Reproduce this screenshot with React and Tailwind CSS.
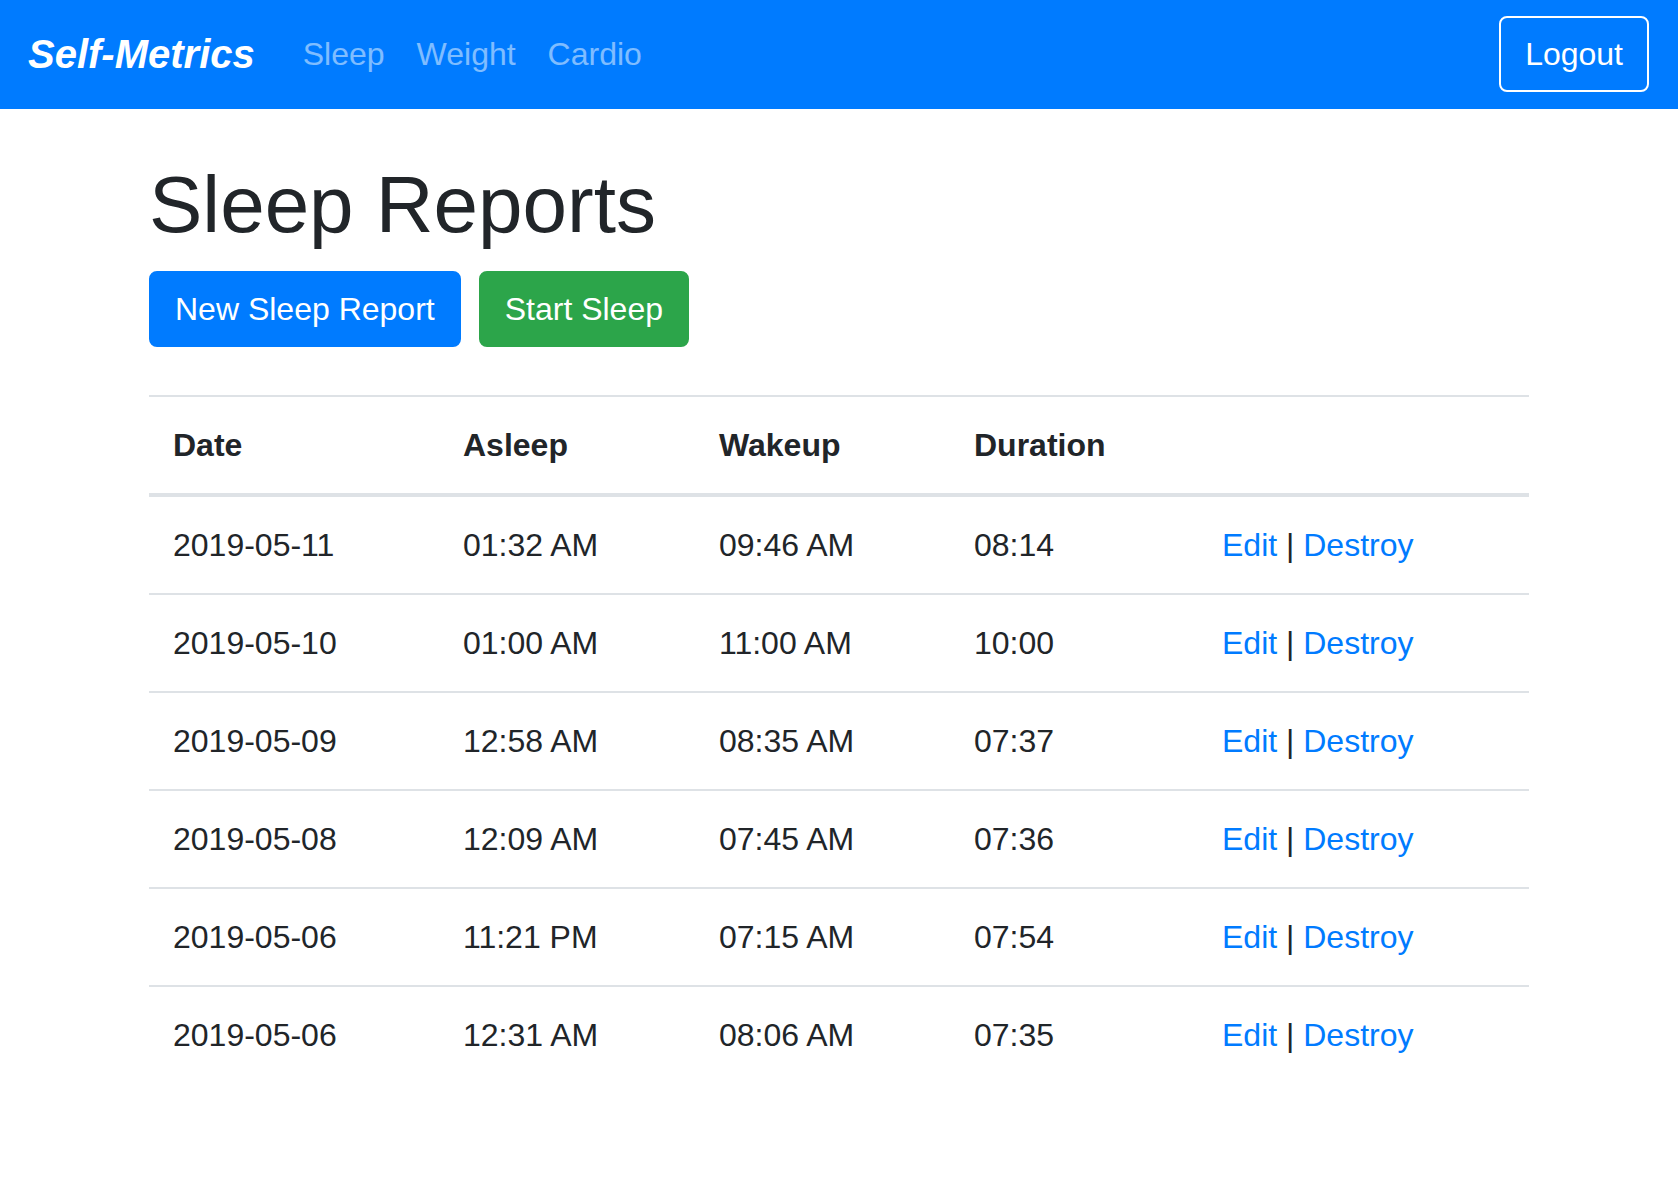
const REPORTS = [
  { date: "2019-05-11", asleep: "01:32 AM", wakeup: "09:46 AM", duration: "08:14" },
  { date: "2019-05-10", asleep: "01:00 AM", wakeup: "11:00 AM", duration: "10:00" },
  { date: "2019-05-09", asleep: "12:58 AM", wakeup: "08:35 AM", duration: "07:37" },
  { date: "2019-05-08", asleep: "12:09 AM", wakeup: "07:45 AM", duration: "07:36" },
  { date: "2019-05-06", asleep: "11:21 PM", wakeup: "07:15 AM", duration: "07:54" },
  { date: "2019-05-06", asleep: "12:31 AM", wakeup: "08:06 AM", duration: "07:35" },
];

function Navbar() {
  return (
    <nav className="flex items-center bg-[#007bff] pl-[28px] pr-[29px] pt-4 pb-[17px]">
      {/* Brand */}
      <a href="#" className="mr-8 py-[8px] text-[40px] leading-[60px] font-bold italic text-white">
        Self-Metrics
      </a>

      {/* Links */}
      <div className="flex items-center">
        {["Sleep", "Weight", "Cardio"].map((label) => (
          <a key={label} href="#" className="px-4 text-[32px] leading-[48px] text-white/50">
            {label}
          </a>
        ))}
      </div>

      {/* Logout */}
      <button className="ml-auto rounded-lg border-2 border-white px-6 py-3 text-[32px] leading-[48px] text-white">
        Logout
      </button>
    </nav>
  );
}

export default function App() {
  return (
    <div className="min-h-screen bg-white font-['Liberation_Sans',Arial,sans-serif] text-[#212529]">
      <Navbar />

      <main className="mx-auto mt-12 w-[1440px] px-[30px]">
        <h1 className="mb-[18px] text-[80px] leading-[96px] font-normal">Sleep Reports</h1>

        <div className="flex gap-[18px]">
          <button className="rounded-lg border-2 border-[#007bff] bg-[#007bff] px-6 py-3 text-[32px] leading-[48px] text-white">
            New Sleep Report
          </button>
          <button className="rounded-lg border-2 border-[#2ca54a] bg-[#2ca54a] px-6 py-3 text-[32px] leading-[48px] text-white">
            Start Sleep
          </button>
        </div>

        <table className="mt-12 w-full table-fixed border-collapse text-left text-[32px] leading-[48px]">
          <thead>
            <tr className="border-t-2 border-b-4 border-[#dee2e6]">
              <th className="w-[290px] p-6 font-bold">Date</th>
              <th className="w-[256px] p-6 font-bold">Asleep</th>
              <th className="w-[255px] p-6 font-bold">Wakeup</th>
              <th className="w-[248px] p-6 font-bold">Duration</th>
              <th className="p-6"></th>
            </tr>
          </thead>
          <tbody>
            {REPORTS.map((r, i) => (
              <tr key={i} className={i > 0 ? "border-t-2 border-[#dee2e6]" : ""}>
                <td className="p-6">{r.date}</td>
                <td className="p-6">{r.asleep}</td>
                <td className="p-6">{r.wakeup}</td>
                <td className="p-6">{r.duration}</td>
                <td className="p-6">
                  <a href="#" className="text-[#007bff]">Edit</a> | <a href="#" className="text-[#007bff]">Destroy</a>
                </td>
              </tr>
            ))}
          </tbody>
        </table>
      </main>
    </div>
  );
}
